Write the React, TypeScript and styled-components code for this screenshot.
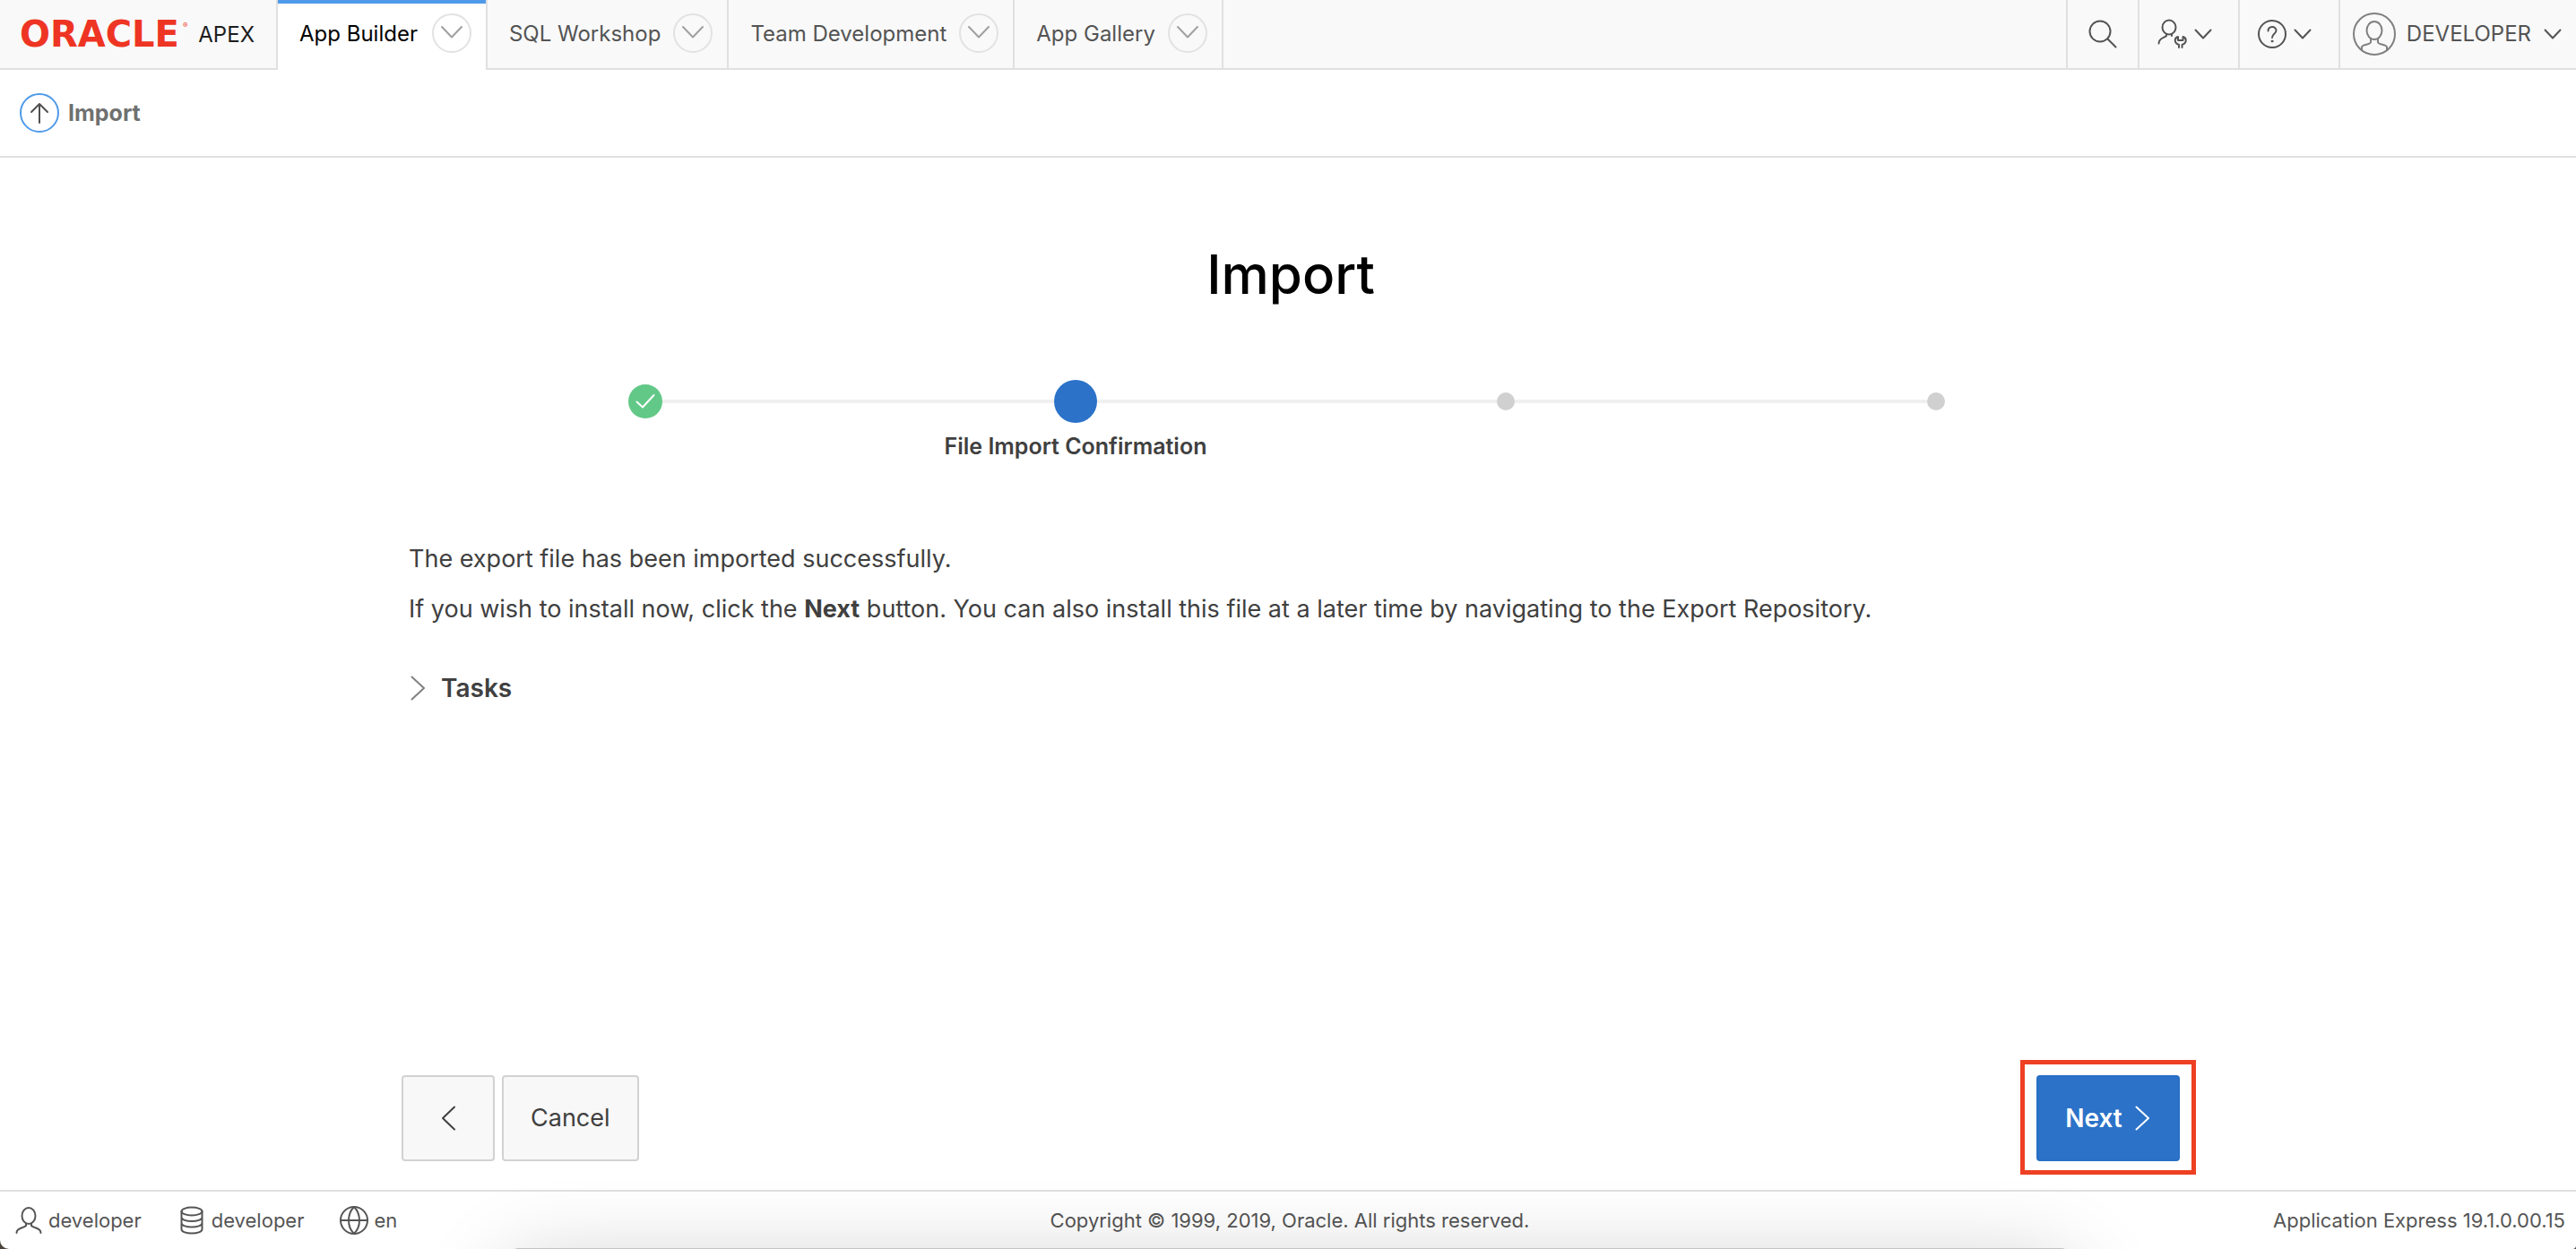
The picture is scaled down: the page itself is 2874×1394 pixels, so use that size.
import React from 'react';
import styled, { createGlobalStyle, css } from 'styled-components';

const GlobalStyle = createGlobalStyle`
  *, *::before, *::after { box-sizing: border-box; }
  body {
    margin: 0;
    background: #4a443a;
    color: #404040;
    font-family: Inter, "Liberation Sans", sans-serif;
    font-size: 24px;
    line-height: 32px;
  }
  button { font: inherit; color: inherit; cursor: pointer; }
  a { color: inherit; text-decoration: none; }
`;

const line = '#e0e0e0';

const Page = styled.div`
  position: relative;
  display: flex;
  flex-direction: column;
  min-height: 100vh;
  overflow: hidden;
  background: #fff;
  border-radius: 0 0 4px 10px;
`;

/* ---- header ---- */
const Header = styled.header`
  display: flex;
  height: 78px;
  background: #f9f9f9;
  color: #545454;
`;

const Brand = styled.a`
  display: flex;
  align-items: center;
  padding: 0 24px 0 22px;
  width: 310px;
  border-right: 2px solid ${line};
  border-bottom: 2px solid ${line};
  color: #1d1d1d;
`;

const Wordmark = styled.span`
  color: #ee3524;
  font-family: "DejaVu Sans", sans-serif;
  font-size: 40px;
  font-weight: 700;
  line-height: 40px;
`;

const Registered = styled.sup`
  align-self: flex-start;
  margin: 20px 0 0 4px;
  color: #ee3524;
  font-size: 8px;
  line-height: 16px;
`;

const Product = styled.span`
  margin-left: auto;
  padding-top: 2px;
`;

const Tabs = styled.nav`
  display: flex;
  flex: 1;
`;

const Tab = styled.div<{ $active?: boolean }>`
  display: flex;
  align-items: center;
  gap: 14px;
  padding: 0 16px 2px 24px;
  border-right: 2px solid ${line};
  border-bottom: 2px solid ${line};
  ${(p) =>
    p.$active &&
    css`
      gap: 16px;
      padding-bottom: 4px;
      border-bottom: 0;
      background: #fff;
      box-shadow: inset 0 4px 0 #4f9ae8;
      color: #000;
    `}
`;

const TabLink = styled.a`
  padding-top: 2px;
`;

const TabMenu = styled.button`
  display: grid;
  place-items: center;
  width: 44px;
  height: 44px;
  padding: 0;
  border: 2px solid #e2e2e2;
  border-radius: 50%;
  background: none;
  && { color: #a0a0a0; }
`;

const TabFill = styled.div`
  flex: 1;
  border-bottom: 2px solid ${line};
`;

const Tool = styled.button<{ $pad: string }>`
  display: flex;
  align-items: center;
  gap: 8px;
  padding: ${(p) => p.$pad};
  border: solid ${line};
  border-width: 0 0 2px 2px;
  background: none;
`;

const UserName = styled.span`
  padding: 0 6px 0 4px;
`;

const Svg = styled.svg<{ $w: number; $h: number }>`
  display: block;
  flex: none;
  width: ${(p) => p.$w}px;
  height: ${(p) => p.$h}px;
  fill: none;
  stroke: currentColor;
  stroke-width: 2;
  stroke-linecap: round;
  stroke-linejoin: round;
`;

const AvatarSvg = styled(Svg)`
  stroke: #808080;
`;

/* ---- breadcrumb ---- */
const Crumbs = styled.nav`
  display: flex;
  align-items: center;
  gap: 10px;
  height: 98px;
  padding: 0 22px;
  border-bottom: 2px solid ${line};
  color: #707070;
  font-size: 25px;
  font-weight: 700;
`;

const UpButton = styled.button`
  display: grid;
  place-items: center;
  width: 44px;
  height: 44px;
  padding: 0;
  border: 2px solid #4f9ae8;
  border-radius: 50%;
  background: #fff;
  && { color: #505050; }
`;

/* ---- wizard ---- */
const Main = styled.main`
  display: flex;
  flex: 1;
  flex-direction: column;
  width: 100%;
  max-width: 1990px;
  margin: 0 auto;
  padding: 90px 0 32px 6px;
`;

const Title = styled.h1`
  margin: 0 0 78px;
  color: #000;
  font-size: 60px;
  font-weight: 500;
  line-height: 80px;
  text-align: center;
`;

const Steps = styled.ol`
  display: grid;
  grid-template-columns: repeat(4, 1fr);
  margin: 0;
  padding: 0 32px;
  list-style: none;
`;

const Step = styled.li`
  text-align: center;
`;

const Track = styled.div`
  display: flex;
  align-items: center;
  height: 48px;
`;

const Rail = styled.span<{ $hidden?: boolean }>`
  flex: 1;
  height: 4px;
  background: ${(p) => (p.$hidden ? 'transparent' : '#f0f0f0')};
`;

const Dot = styled.span<{ $size: number; $color: string }>`
  display: grid;
  place-items: center;
  width: ${(p) => p.$size}px;
  height: ${(p) => p.$size}px;
  border-radius: 50%;
  background: ${(p) => p.$color};
  color: #fff;
`;

const StepLabel = styled.div`
  margin-top: 10px;
  font-size: 25px;
  font-weight: 600;
`;

const Copy = styled.section`
  flex: 1;
  padding: 90px 8px 0;
  line-height: 40px;
`;

const Paragraph = styled.p`
  margin: 0 0 16px;
  font-size: 27px;
`;

const TasksToggle = styled.button`
  display: flex;
  align-items: center;
  gap: 16px;
  margin-top: 48px;
  padding: 0;
  border: 0;
  background: none;
  && { font-size: 28px; }
  font-weight: 600;
  svg { color: #808080; }
`;

const Actions = styled.div`
  display: flex;
  gap: 8px;
`;

const ActionButton = styled.button<{ $primary?: boolean }>`
  display: flex;
  align-items: center;
  justify-content: center;
  gap: 12px;
  height: 96px;
  min-width: 104px;
  padding: 0 30px;
  border: 2px solid #d2d2d2;
  border-radius: 4px;
  background: #f8f8f8;
  && { font-size: 27px; }
  ${(p) =>
    p.$primary &&
    css`
      min-width: 160px;
      border-color: #286fc4;
      background: #2b72c8;
      font-weight: 600;
      && { color: #fff; font-size: 28px; }
    `}
`;

const NextWrap = styled.div`
  position: relative;
  margin-left: auto;
`;

const Highlight = styled.span`
  position: absolute;
  inset: -17px -18px -15px;
  border: 5px solid #ee4023;
  pointer-events: none;
`;

/* ---- footer ---- */
const Footer = styled.footer`
  display: grid;
  grid-template-columns: 1fr auto 1fr;
  align-items: center;
  height: 66px;
  padding: 0 12px 0 16px;
  border-top: 2px solid ${line};
  color: #555;
  font-size: 22px;
`;

const Meta = styled.ul`
  display: flex;
  gap: 40px;
  margin: 0;
  padding: 0;
  list-style: none;
`;

const MetaItem = styled.li`
  display: flex;
  align-items: center;
  gap: 6px;
`;

const Version = styled.span`
  text-align: right;
`;

const BottomShade = styled.div`
  position: absolute;
  top: calc(100% - 1px);
  right: 566px;
  left: 570px;
  height: 200px;
  border-radius: 8px;
  background: #c4c4c4;
  box-shadow: 0 24px 100px rgba(0, 0, 0, 0.24);
  pointer-events: none;
`;

const TabChevron = () => (
  <Svg $w={24} $h={24} viewBox="0 0 24 24"><path d="M1 5l11 11.5L23 5" /></Svg>
);
const SmallChevron = () => (
  <Svg $w={20} $h={20} viewBox="0 0 20 20"><path d="M1.500 5.500L10 14.500l8.500-9" /></Svg>
);
const SideChevron = ({ left }: { left?: boolean }) => (
  <Svg $w={20} $h={32} viewBox="0 0 20 32" strokeWidth="2.400">
    <path d={left ? 'M17 3.500L4 16l13 12.500' : 'M3.500 3.500L17 16 3.500 28.500'} />
  </Svg>
);

const tabs = ['App Builder', 'SQL Workshop', 'Team Development', 'App Gallery'];

export default function App() {
  return (
    <>
      <GlobalStyle />
      <Page>
        <Header>
          <Brand href="#">
            <Wordmark>ORACLE</Wordmark>
            <Registered>®</Registered>
            <Product>APEX</Product>
          </Brand>
          <Tabs aria-label="Main">
            {tabs.map((name, i) => (
              <Tab key={name} $active={i === 0}>
                <TabLink href="#">{name}</TabLink>
                <TabMenu aria-label={`${name} menu`}><TabChevron /></TabMenu>
              </Tab>
            ))}
            <TabFill />
          </Tabs>
          <Tool $pad="0 23px" aria-label="Search">
            <Svg $w={32} $h={32} viewBox="0 0 32 32">
              <circle cx="13" cy="13" r="11.500" />
              <path d="M21.500 21.500l9 9" />
            </Svg>
          </Tool>
          <Tool $pad="0 29px 0 19px" aria-label="Administration">
            <Svg $w={34} $h={34} viewBox="0 0 34 34">
              <ellipse cx="14" cy="9.500" rx="7.500" ry="8" />
              <path d="M11 17v2C8.500 21.500 2.500 21 2.500 27.500M17 17v2" />
              <path d="M25 32v-3c-5.500-2-5.500-7.500-1-9v4h5.500v-4c4.500 1.500 4.500 7-1 9v3" />
            </Svg>
            <SmallChevron />
          </Tool>
          <Tool $pad="0 30px 0 20px" aria-label="Help">
            <Svg $w={32} $h={32} viewBox="0 0 32 32">
              <circle cx="16" cy="16" r="15" />
              <path d="M11.500 12.500c0-6 9-6 9-.5 0 4-4.500 3.500-4.500 8" />
              <circle cx="16" cy="24" r="1" fill="currentColor" strokeWidth="1" />
            </Svg>
            <SmallChevron />
          </Tool>
          <Tool $pad="0 16px 0 14px">
            <AvatarSvg $w={48} $h={48} viewBox="0 0 48 48">
              <circle cx="24" cy="24" r="23" />
              <ellipse cx="24" cy="20" rx="8.500" ry="10" />
              <path d="M20 29v4c0 3-10 2.500-10 5.500V42M28 29v4c0 3 10 2.500 10 5.500V42" />
            </AvatarSvg>
            <UserName>DEVELOPER</UserName>
            <SmallChevron />
          </Tool>
        </Header>

        <Crumbs aria-label="Breadcrumb">
          <UpButton aria-label="Up">
            <Svg $w={24} $h={24} viewBox="0 0 24 24">
              <path d="M12 23V2M3 11l9-9 9 9" />
            </Svg>
          </UpButton>
          <span>Import</span>
        </Crumbs>

        <Main>
          <Title>Import</Title>
          <Steps>
            <Step>
              <Track>
                <Rail $hidden />
                <Dot $size={38} $color="#62c887">
                  <Svg $w={22} $h={18} viewBox="0 0 22 18">
                    <path d="M1.500 9.500l6.500 6L20.500 2" />
                  </Svg>
                </Dot>
                <Rail />
              </Track>
            </Step>
            <Step aria-current="step">
              <Track>
                <Rail />
                <Dot $size={48} $color="#2b72c8" />
                <Rail />
              </Track>
              <StepLabel>File Import Confirmation</StepLabel>
            </Step>
            <Step>
              <Track>
                <Rail />
                <Dot $size={20} $color="#d0d0d0" />
                <Rail />
              </Track>
            </Step>
            <Step>
              <Track>
                <Rail />
                <Dot $size={20} $color="#d0d0d0" />
                <Rail $hidden />
              </Track>
            </Step>
          </Steps>

          <Copy>
            <Paragraph>The export file has been imported successfully.</Paragraph>
            <Paragraph>
              If you wish to install now, click the <strong>Next</strong> button. You can also
              install this file at a later time by navigating to the Export Repository.
            </Paragraph>
            <TasksToggle aria-expanded="false">
              <SideChevron />
              Tasks
            </TasksToggle>
          </Copy>

          <Actions>
            <ActionButton aria-label="Previous"><SideChevron left /></ActionButton>
            <ActionButton>Cancel</ActionButton>
            <NextWrap>
              <ActionButton $primary>
                Next
                <SideChevron />
              </ActionButton>
              <Highlight />
            </NextWrap>
          </Actions>
        </Main>

        <Footer>
          <Meta>
            <MetaItem>
              <Svg $w={32} $h={32} viewBox="0 0 32 32">
                <ellipse cx="16" cy="11" rx="7.500" ry="9" />
                <path d="M13 19.500v2.500c-3 3-10.500 2-10.500 8M19 19.500v2.500c3 3 10.500 2 10.500 8" />
              </Svg>
              developer
            </MetaItem>
            <MetaItem>
              <Svg $w={32} $h={32} viewBox="0 0 32 32">
                <ellipse cx="16" cy="6" rx="11.500" ry="4.500" />
                <path d="M4.500 6v20c0 6 23 6 23 0V6M4.500 12.500c0 6 23 6 23 0M4.500 19c0 6 23 6 23 0" />
              </Svg>
              developer
            </MetaItem>
            <MetaItem>
              <Svg $w={32} $h={32} viewBox="0 0 32 32">
                <circle cx="16" cy="16" r="15" />
                <path d="M1 16h30M16 1c-8 8-8 22 0 30M16 1c8 8 8 22 0 30" />
              </Svg>
              en
            </MetaItem>
          </Meta>
          <span>Copyright © 1999, 2019, Oracle. All rights reserved.</span>
          <Version>Application Express 19.1.0.00.15</Version>
        </Footer>
        <BottomShade />
      </Page>
    </>
  );
}
